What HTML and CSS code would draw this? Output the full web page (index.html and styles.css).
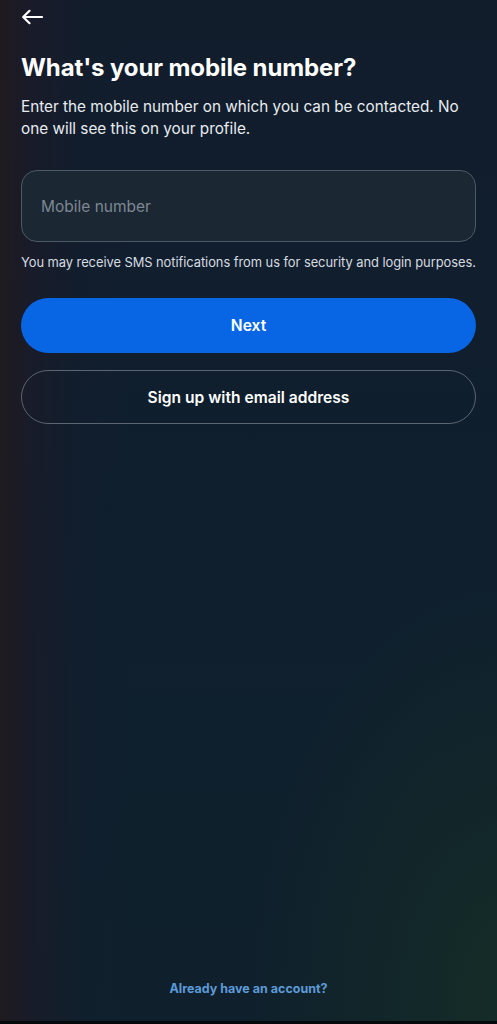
FILE: index.html
```html
<!DOCTYPE html>
<html lang="en">
<head>
<meta charset="utf-8">
<title>Mobile number</title>
<link rel="stylesheet" href="styles.css">
</head>
<body>
<div class="screen">
  <header class="topbar">
    <button class="back" aria-label="Back">
      <svg width="22" height="16" viewBox="0 0 22 16" fill="none" stroke="#ffffff" stroke-width="2.2" stroke-linecap="round" stroke-linejoin="round"><path d="M21 8H2.5M8.5 1.8L2.2 8l6.3 6.2"/></svg>
    </button>
  </header>
  <main class="content">
    <h1 class="title">What's your mobile number?</h1>
    <p class="lead">Enter the mobile number on which you can be contacted. No one will see this on your profile.</p>
    <div class="field">
      <input class="input" type="tel" placeholder="Mobile number">
    </div>
    <p class="hint">You may receive SMS notifications from us for security and login purposes.</p>
    <button class="btn primary">Next</button>
    <button class="btn outline">Sign up with email address</button>
  </main>
  <footer class="footer">
    <a class="link" href="#">Already have an account?</a>
  </footer>
</div>
</body>
</html>
```

FILE: styles.css
```css
* { box-sizing: border-box; }
html, body { margin: 0; padding: 0; height: 100%; }
body {
  font-family: Inter, "Noto Sans", sans-serif;
  color: #ffffff;
  background: #0f1f2d;
}
.screen {
  height: 1024px;
  display: flex;
  flex-direction: column;
  background:
    linear-gradient(to right, rgba(32,26,30,0.95) 0px, rgba(28,26,40,0.7) 30px, rgba(20,28,44,0.25) 80px, rgba(15,31,45,0) 130px),
    radial-gradient(ellipse 260px 420px at 510px 1000px, rgba(22,48,38,0.8), rgba(15,31,45,0) 100%),
    linear-gradient(to bottom, #121d2c 0%, #0f1f2e 50%, #0f202c 100%);
  border-bottom: 3px solid #05090c;
}
.topbar {
  height: 34px;
  padding: 8px 0 0 21px;
}
.back {
  background: none;
  border: 0;
  padding: 0;
  width: 24px;
  height: 18px;
  display: flex;
  align-items: center;
  cursor: pointer;
}
.content {
  padding: 0 21px;
  display: flex;
  flex-direction: column;
}
.title {
  margin: 19px 0 0;
  font-size: 24px;
  line-height: 30px;
  font-weight: 700;
  letter-spacing: -0.1px;
}
.lead {
  margin: 13px 0 0;
  font-size: 15.3px;
  line-height: 22px;
  color: #e8ecf0;
}
.field { margin-top: 30px; }
.input {
  display: block;
  width: 100%;
  height: 72px;
  border: 1px solid #4c5a66;
  border-radius: 16px;
  background: #1b2733;
  color: #ffffff;
  font-family: inherit;
  font-size: 15.5px;
  padding: 0 19px;
  outline: none;
}
.input::placeholder { color: #7b8792; }
.hint {
  margin: 12px 0 0;
  font-size: 12.9px;
  line-height: 18px;
  color: #d6dbe0;
  white-space: nowrap;
  letter-spacing: -0.05px;
}
.btn {
  font-family: inherit;
  width: 100%;
  border-radius: 28px;
  font-size: 15.6px;
  font-weight: 600;
  color: #ffffff;
  cursor: pointer;
}
.primary {
  margin-top: 26px;
  height: 55px;
  border: 0;
  background: #0866e5;
}
.outline {
  margin-top: 17px;
  height: 54px;
  background: transparent;
  border: 1px solid #5a6570;
}
.footer {
  margin-top: auto;
  padding-bottom: 24px;
  text-align: center;
}
.link {
  font-size: 12.5px;
  font-weight: 700;
  color: #5d9ad8;
  text-decoration: none;
}
```
